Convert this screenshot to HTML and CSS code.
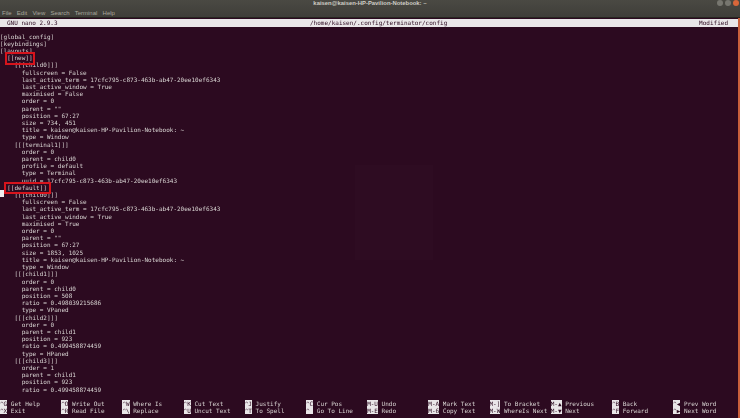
FILE: index.html
```html
<!DOCTYPE html>
<html lang="en">
<head>
<meta charset="utf-8">
<title>kaisen@kaisen-HP-Pavilion-Notebook: ~</title>
<link rel="stylesheet" href="styles.css">
</head>
<body>
<div class="window">
  <header class="chrome">
    <div class="titlebar">
      <span class="title">kaisen@kaisen-HP-Pavilion-Notebook: ~</span>
      <div class="controls">
        <span class="ctl"></span><span class="ctl"></span><span class="ctl close"></span>
      </div>
    </div>
    <nav class="menu"><span>File</span><span>Edit</span><span>View</span><span>Search</span><span>Terminal</span><span>Help</span></nav>
  </header>
  <div class="term-wrap">
    <main class="term">
      <div class="nano-head"><span>GNU nano 2.9.3</span><span class="path">/home/kaisen/.config/terminator/config</span><span>Modified</span></div>
<pre class="buffer">[global_config]
[keybindings]
[layouts]
  [[new]]
    [[[child0]]]
      fullscreen = False
      last_active_term = 17cfc795-c873-463b-ab47-20ee10ef6343
      last_active_window = True
      maximised = False
      order = 0
      parent = ""
      position = 67:27
      size = 734, 451
      title = kaisen@kaisen-HP-Pavilion-Notebook: ~
      type = Window
    [[[terminal1]]]
      order = 0
      parent = child0
      profile = default
      type = Terminal
      uuid = 17cfc795-c873-463b-ab47-20ee10ef6343
  [[default]]
    [[[child0]]]
      fullscreen = False
      last_active_term = 17cfc795-c873-463b-ab47-20ee10ef6343
      last_active_window = True
      maximised = True
      order = 0
      parent = ""
      position = 67:27
      size = 1853, 1025
      title = kaisen@kaisen-HP-Pavilion-Notebook: ~
      type = Window
    [[[child1]]]
      order = 0
      parent = child0
      position = 508
      ratio = 0.498039215686
      type = VPaned
    [[[child2]]]
      order = 0
      parent = child1
      position = 923
      ratio = 0.499458874459
      type = HPaned
    [[[child3]]]
      order = 1
      parent = child1
      position = 923
      ratio = 0.499458874459</pre>
      <footer class="keys">
        <span class="k"><b>^G</b> Get Help</span><span class="k"><b>^O</b> Write Out</span><span class="k"><b>^W</b> Where Is</span><span class="k"><b>^K</b> Cut Text</span><span class="k"><b>^J</b> Justify</span><span class="k"><b>^C</b> Cur Pos</span><span class="k"><b>M-U</b> Undo</span><span class="k"><b>M-A</b> Mark Text</span><span class="k"><b>M-]</b> To Bracket</span><span class="k"><b>M-▲</b> Previous</span><span class="k"><b>^B</b> Back</span><span class="k"><b>^◀</b> Prev Word</span>
        <span class="k"><b>^X</b> Exit</span><span class="k"><b>^R</b> Read File</span><span class="k"><b>^\</b> Replace</span><span class="k"><b>^U</b> Uncut Text</span><span class="k"><b>^T</b> To Spell</span><span class="k"><b>^_</b> Go To Line</span><span class="k"><b>M-E</b> Redo</span><span class="k"><b>M-6</b> Copy Text</span><span class="k"><b>M-W</b> WhereIs Next</span><span class="k"><b>M-▼</b> Next</span><span class="k"><b>^F</b> Forward</span><span class="k"><b>^▶</b> Next Word</span>
      </footer>
      <i class="watermark"></i>
      <i class="cursor"></i>
      <i class="mark mark-new"></i>
      <i class="mark mark-default"></i>
    </main>
    <div class="edge"></div>
  </div>
</div>
</body>
</html>
```
FILE: styles.css
```css
* { box-sizing: border-box; }
html, body { margin: 0; padding: 0; background: #2c0a20; }
body { width: 740px; height: 418px; overflow: hidden; }
.window { width: 740px; height: 418px; display: flex; flex-direction: column; }
.chrome {
  height: 18px;
  background: linear-gradient(#4a4943, #3f3e39);
  border-bottom: 1px solid #26251f;
  color: #b9b7ae;
  flex: none;
  position: relative;
}
.titlebar { height: 7px; display: flex; justify-content: center; align-items: center; }
.title { font: bold 5.9px/7px "Liberation Sans", sans-serif; color: #cfcdc6; }
.controls { position: absolute; right: 1px; top: 0; display: flex; gap: 2px; }
.ctl { width: 6px; height: 6px; border-radius: 50%; background: #77766f; }
.ctl.close { background: #d9663a; }
.menu { display: flex; gap: 5.2px; padding: 2px 0 0 2px; font: 6px/8px "Liberation Sans", sans-serif; color: #a9a79e; }
.term-wrap { flex: 1; display: flex; min-height: 0; }
.term {
  flex: 1;
  position: relative;
  background: #2c0a20;
  color: #d8d4d2;
  font: 6px/7.2px "DejaVu Sans Mono", monospace;
  display: flex;
  flex-direction: column;
  filter: blur(.25px);
}
.edge { width: 2px; background: #c9603c; flex: none; }
.nano-head {
  height: 8px;
  margin-top: 1px;
  padding: 0 10px 0 7px;
  background: #e9e6e8;
  color: #2c0a20;
  display: flex;
  justify-content: space-between;
  line-height: 7.5px;
  position: relative;
}
.path { position: absolute; left: 310px; }
.buffer { margin: 5.6px 0 0; font: inherit; flex: 1; min-height: 0; }
.keys {
  display: grid;
  grid-template-columns: repeat(12, 61.2px);
  grid-auto-rows: 7.2px;
  margin-bottom: 3.6px;
  white-space: pre;
}
.k { overflow: visible; }
.k b { font-weight: normal; background: #e9e6e8; color: #2c0a20; }
.watermark { position: absolute; left: 355px; top: 147px; width: 78px; height: 95px; background: rgba(255,255,255,.012); }
.cursor { position: absolute; left: 0; top: 172px; width: 3.6px; height: 7.4px; background: #eee; }
.mark { position: absolute; border: 2px solid #d7141c; }
.mark-new { left: 5px; top: 34px; width: 30px; height: 13px; }
.mark-default { left: 4px; top: 163.5px; width: 47px; height: 12.5px; }
```
